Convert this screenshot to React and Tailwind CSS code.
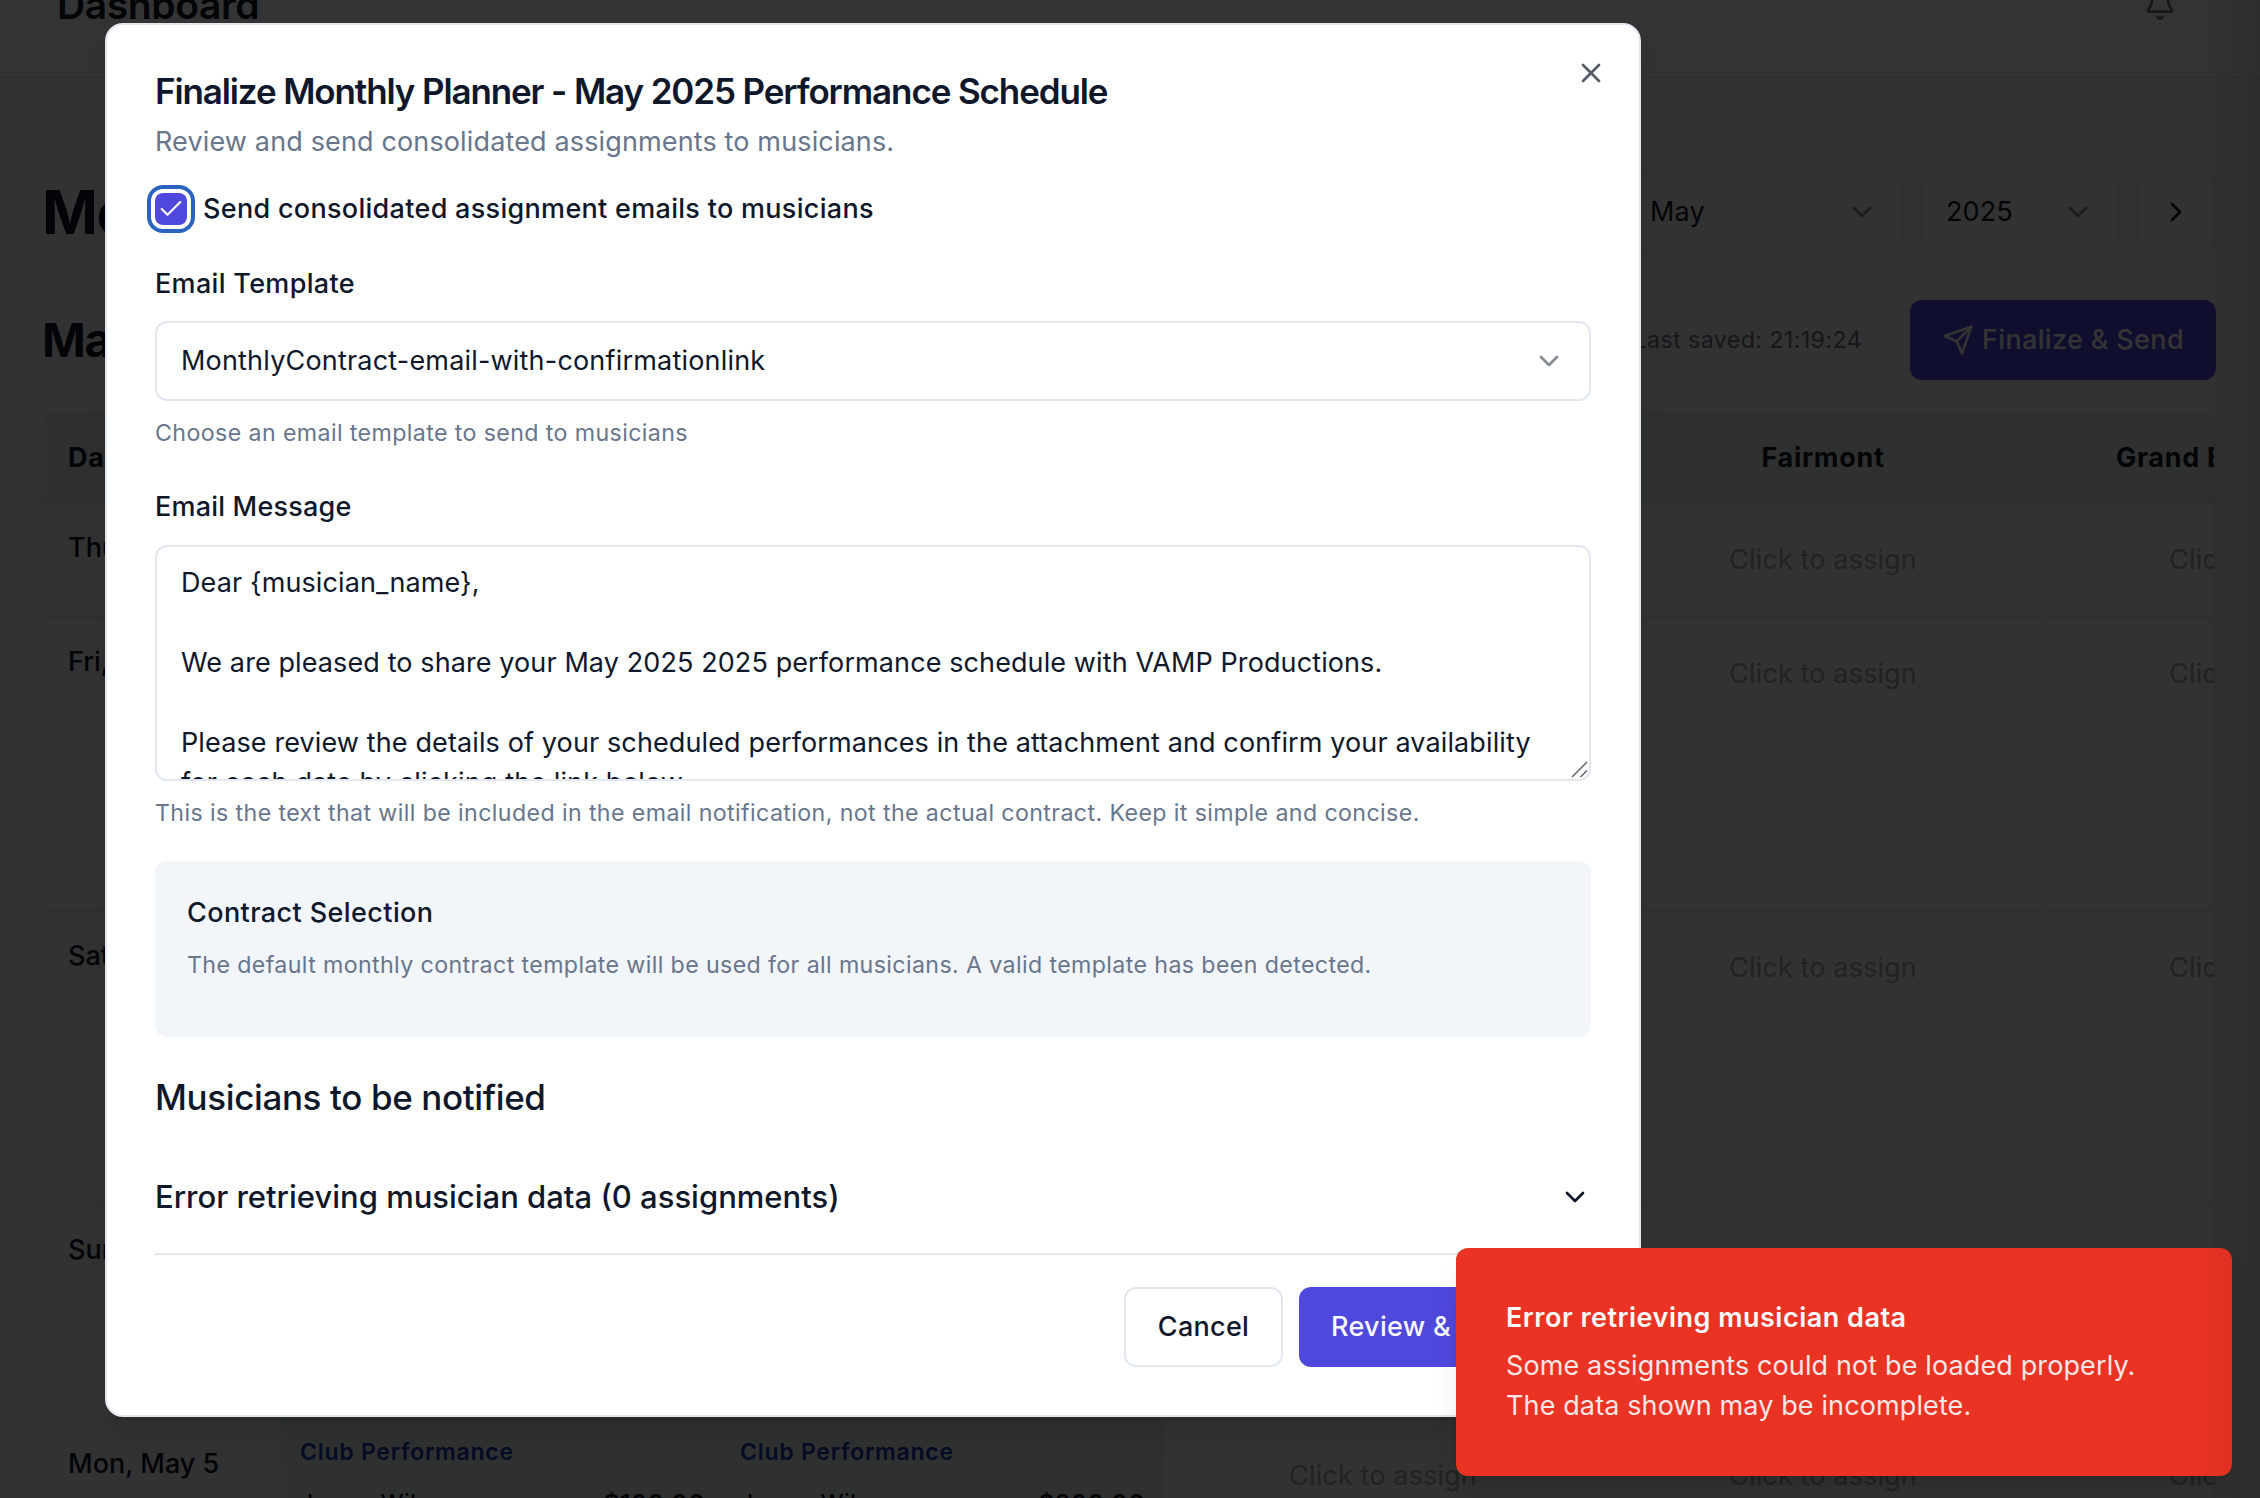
import React from "react";
import { Bell, Check, ChevronDown, ChevronRight, X } from "lucide-react";

function SendIcon() {
  return (
    <svg className="size-8 shrink-0" viewBox="0 0 24 24" fill="none" stroke="currentColor" strokeWidth="2" strokeLinecap="round" strokeLinejoin="round">
      <path d="m22 2-7 20-4-9-9-4Z" />
      <path d="M22 2 11 13" />
    </svg>
  );
}

function ResizeHandle() {
  return (
    <svg className="absolute right-[1px] bottom-[1px] size-[18px]" viewBox="0 0 18 18" fill="none" stroke="#6b6b6b" strokeWidth="1.6">
      <path d="M2 17 17 2M10.5 17 17 10.5" />
    </svg>
  );
}

function FilterSelect({ value, width }) {
  return (
    <div className={`flex h-20 items-center justify-between rounded-xl border-2 border-slate-200 px-6 text-[27px] tracking-[0.13px] ${width}`}>
      <span className="pt-px">{value}</span>
      <ChevronDown className="size-8 opacity-50" />
    </div>
  );
}

const empty = { kind: "empty" };
const assignable = { kind: "assign" };
const club = (fee) => ({ kind: "club", fee });

const rows = [
  { day: "Thu, May 1", height: "h-[114px]", cells: [empty, empty, empty, assignable, assignable] },
  { day: "Fri, May 2", height: "h-[294px]", cells: [empty, empty, empty, assignable, assignable] },
  { day: "Sat, May 3", height: "h-[294px]", cells: [empty, empty, empty, assignable, assignable] },
  { day: "Sun, May 4", height: "h-[214px]", cells: [empty, empty, empty, empty, empty] },
  { day: "Mon, May 5", height: "h-[294px]", cells: [club("$100.00"), club("$200.00"), assignable, assignable, assignable] },
];

function PlannerCell({ cell }) {
  if (cell.kind === "club") {
    return (
      <div className="w-[440px] shrink-0 border-r-2 border-slate-200 bg-[#ecf4f2] px-4 pt-4 text-[23px] leading-8">
        <div className="border-b-2 border-slate-200 pb-2 font-semibold tracking-[0.75px] text-blue-800">Club Performance</div>
        <div className="flex justify-between pt-[9px] pr-px font-medium tracking-[0.3px]">
          <span>James Wilson</span>
          <span className="text-[24.5px] font-semibold tracking-[0.6px]">{cell.fee}</span>
        </div>
      </div>
    );
  }
  return (
    <div className="w-[440px] shrink-0 border-r-2 border-slate-200">
      {cell.kind === "assign" && (
        <div className="flex h-28 items-center justify-center pt-px text-[27px] tracking-[0.14px] text-[#a8a8ab]">Click to assign</div>
      )}
    </div>
  );
}

function PlannerTable() {
  return (
    <div className="mt-8 overflow-hidden rounded-t-xl border-2 border-slate-200">
      <div className="flex h-[90px] items-center border-b-2 border-slate-200 bg-[#ecf4f2] text-[27px] font-bold tracking-[0.7px]">
        <div className="flex h-full w-60 shrink-0 items-center border-r-2 border-slate-200 pl-6">Date</div>
        <div className="h-full w-[440px] shrink-0 border-r-2 border-slate-200" />
        <div className="h-full w-[440px] shrink-0 border-r-2 border-slate-200" />
        <div className="h-full w-[440px] shrink-0 border-r-2 border-slate-200" />
        <div className="flex h-full w-[440px] shrink-0 items-center justify-center border-r-2 border-slate-200">Fairmont</div>
        <div className="flex h-full w-[440px] shrink-0 items-center pl-[72px] whitespace-nowrap">Grand Ballroom</div>
      </div>
      {rows.map((row) => (
        <div key={row.day} className={`flex border-b-2 border-slate-200 ${row.height}`}>
          <div className="w-60 shrink-0 border-r-2 border-slate-200 pt-6 pl-6 text-[27px] leading-10 font-medium whitespace-nowrap">{row.day}</div>
          {row.cells.map((cell, i) => (
            <PlannerCell key={i} cell={cell} />
          ))}
        </div>
      ))}
    </div>
  );
}

function PlannerPage() {
  return (
    <div className="h-[1498px] overflow-hidden bg-[#fafafa]">
      <header className="-mt-[67px] flex h-[145px] items-center justify-between border-b-2 border-slate-200 bg-white pr-[84px] pl-[57px]">
        <span className="text-[39px] leading-10 font-semibold tracking-[-0.4px]">Dashboard</span>
        <Bell className="size-8 text-gray-500" />
      </header>
      <main className="pt-[94px] pr-11 pl-[42px]">
        <div className="flex h-20 items-center justify-between">
          <h1 className="text-[60px] font-bold tracking-[-1.5px]">Monthly Planner</h1>
          <div className="flex gap-4">
            <FilterSelect value="May" width="w-[280px]" />
            <FilterSelect value="2025" width="w-[200px]" />
            <div className="flex size-20 items-center justify-center rounded-xl border-2 border-slate-200">
              <ChevronRight className="size-8" />
            </div>
          </div>
        </div>
        <div className="mt-12 flex h-20 items-center justify-between">
          <h2 className="text-[47px] font-bold tracking-[-1.2px]">May 2025</h2>
          <div className="flex items-center gap-12">
            <span className="text-[23.2px] tracking-[0.4px] text-gray-500">Last saved: 21:19:24</span>
            <div className="flex h-20 w-[306px] items-center gap-2 rounded-xl bg-[#4f46e5] pl-8 text-[27px] font-medium tracking-[0.35px] whitespace-nowrap text-white">
              <SendIcon />
              <span className="pt-px">Finalize &amp; Send</span>
            </div>
          </div>
        </div>
        <PlannerTable />
      </main>
    </div>
  );
}

function FinalizeDialog() {
  return (
    <div className="absolute top-[23px] left-[105px] h-[1394px] w-[1536px] rounded-[18px] border-2 border-slate-200 bg-white px-12 pt-12 shadow-[0_20px_30px_-6px_rgba(0,0,0,0.1),0_8px_12px_-8px_rgba(0,0,0,0.1)]">
      <X className="absolute top-8 right-8 size-8 opacity-70" />
      <h2 className="text-[35px] leading-9 font-semibold tracking-[-1.12px] whitespace-nowrap">Finalize Monthly Planner - May 2025 Performance Schedule</h2>
      <p className="mt-[13px] text-[27px] leading-10 tracking-[0.14px] text-[#68768c]">Review and send consolidated assignments to musicians.</p>

      <div className="mt-[31px] flex h-8 items-center gap-4 text-[27px] font-medium tracking-[0.3px]">
        <div className="flex size-8 items-center justify-center rounded-lg bg-[#4f48dd] text-white ring-4 ring-[#2b64c0] ring-offset-4 ring-offset-white">
          <Check className="size-7" strokeWidth={1.8} />
        </div>
        <span className="pt-px">Send consolidated assignment emails to musicians</span>
      </div>

      <div className="mt-[45px] text-[27px] leading-7 font-medium tracking-[0.32px]">Email Template</div>
      <div className="mt-[23px] flex h-20 items-center justify-between rounded-xl border-2 border-slate-200 px-6 text-[27px] tracking-[0.19px]">
        <span className="pt-px">MonthlyContract-email-with-confirmationlink</span>
        <ChevronDown className="size-8 opacity-50" />
      </div>
      <p className="mt-4 text-[23.2px] leading-8 tracking-[0.39px] text-[#68768c]">Choose an email template to send to musicians</p>

      <div className="mt-11 text-[27px] leading-7 font-medium tracking-[0.2px]">Email Message</div>
      <div className="relative mt-6 h-[236px] overflow-hidden rounded-xl border-2 border-slate-200 px-6 py-4 text-[27px] leading-10 tracking-[0.12px] whitespace-nowrap">
        <div>Dear {"{musician_name}"},</div>
        <div className="mt-10 tracking-[0.1px]">We are pleased to share your May 2025 2025 performance schedule with VAMP Productions.</div>
        <div className="mt-10">Please review the details of your scheduled performances in the attachment and confirm your availability</div>
        <div>for each date by clicking the link below.</div>
        <ResizeHandle />
      </div>
      <p className="mt-4 text-[23.2px] leading-8 tracking-[0.39px] whitespace-nowrap text-[#68768c]">
        This is the text that will be included in the email notification, not the actual contract. Keep it simple and concise.
      </p>

      <div className="mt-8 h-44 rounded-xl bg-[#f2f5fa] p-8">
        <h3 className="text-[27px] leading-10 font-medium tracking-[0.4px]">Contract Selection</h3>
        <p className="mt-4 text-[23.2px] leading-8 tracking-[0.38px] whitespace-nowrap text-[#68768c]">
          The default monthly contract template will be used for all musicians. A valid template has been detected.
        </p>
      </div>

      <h3 className="mt-8 text-[35px] leading-[56px] font-medium tracking-[-0.38px]">Musicians to be notified</h3>
      <div className="mt-4 flex h-[114px] items-center justify-between border-b-2 border-slate-200 text-[31px] font-medium">
        <span>Error retrieving musician data (0 assignments)</span>
        <ChevronDown className="size-8" />
      </div>

      <div className="mt-8 flex justify-end gap-4 text-[27px] font-medium tracking-[0.3px]">
        <div className="flex h-20 w-[159px] items-center justify-center rounded-xl border-2 border-slate-200">Cancel</div>
        <div className="flex h-20 w-[292px] items-center rounded-xl bg-[#4f48dd] pl-8 text-slate-50">Review &amp;</div>
      </div>
    </div>
  );
}

function ErrorToast() {
  return (
    <div className="absolute top-[1248px] left-[1456px] h-[228px] w-[776px] rounded-xl bg-[#eb3323] p-[50px] text-[27px] leading-10 text-slate-50 shadow-[0_20px_30px_-6px_rgba(0,0,0,0.1),0_8px_12px_-8px_rgba(0,0,0,0.1)]">
      <div className="font-semibold tracking-[0.5px]">Error retrieving musician data</div>
      <div className="mt-2 tracking-[0.12px] opacity-90">
        Some assignments could not be loaded properly.
        <br />
        The data shown may be incomplete.
      </div>
    </div>
  );
}

export default function App() {
  return (
    <div className="relative h-[1498px] w-[2260px] overflow-hidden font-['Inter',sans-serif] text-[#0f172a]">
      <PlannerPage />
      <div className="absolute inset-0 bg-black/80" />
      <FinalizeDialog />
      <ErrorToast />
      <div className="absolute inset-y-0 right-0 w-16 bg-linear-to-r from-transparent to-black/10" />
    </div>
  );
}
